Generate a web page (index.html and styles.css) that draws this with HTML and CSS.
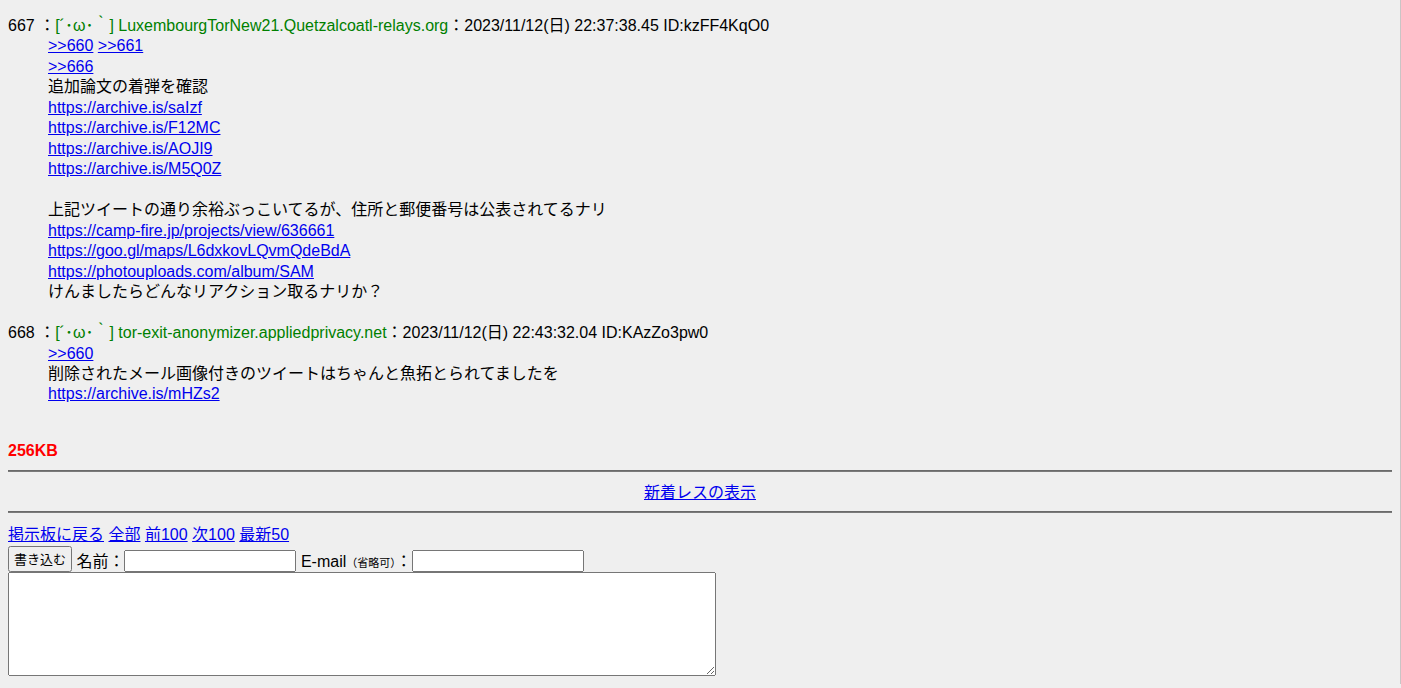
FILE: index.html
```html
<!DOCTYPE html>
<html lang="ja">
<head>
  <meta charset="UTF-8">
  <title>スレッド</title>
  <link rel="stylesheet" href="styles.css">
</head>
<body>

  <dl class="thread">
    <dt>667 ：<span class="name">[´･ω･｀] LuxembourgTorNew21.Quetzalcoatl-relays.org</span>：2023/11/12(日) 22:37:38.45 ID:kzFF4KqO0</dt>
    <dd>
      <a href="#">&gt;&gt;660</a> <a href="#">&gt;&gt;661</a><br>
      <a href="#">&gt;&gt;666</a><br>
      追加論文の着弾を確認<br>
      <a href="#">https://archive.is/saIzf</a><br>
      <a href="#">https://archive.is/F12MC</a><br>
      <a href="#">https://archive.is/AOJI9</a><br>
      <a href="#">https://archive.is/M5Q0Z</a><br>
      <br>
      上記ツイートの通り余裕ぶっこいてるが、住所と郵便番号は公表されてるナリ<br>
      <a href="#">https://camp-fire.jp/projects/view/636661</a><br>
      <a href="#">https://goo.gl/maps/L6dxkovLQvmQdeBdA</a><br>
      <a href="#">https://photouploads.com/album/SAM</a><br>
      けんましたらどんなリアクション取るナリか？<br>
      <br>
    </dd>
    <dt>668 ：<span class="name">[´･ω･｀] tor-exit-anonymizer.appliedprivacy.net</span>：2023/11/12(日) 22:43:32.04 ID:KAzZo3pw0</dt>
    <dd>
      <a href="#">&gt;&gt;660</a><br>
      削除されたメール画像付きのツイートはちゃんと魚拓とられてましたを<br>
      <a href="#">https://archive.is/mHZs2</a><br>
      <br>
    </dd>
  </dl>

  <p class="size">256KB</p>
  <hr>
  <div class="newres"><a href="#">新着レスの表示</a></div>
  <hr>

  <div class="nav">
    <a href="#">掲示板に戻る</a> <a href="#">全部</a> <a href="#">前100</a> <a href="#">次100</a> <a href="#">最新50</a>
  </div>

  <form class="post">
    <div class="row"><button type="button">書き込む</button> 名前：<input type="text" class="field"> E-mail<small>（省略可）</small>：<input type="text" class="field"></div>
    <textarea rows="5" cols="70"></textarea>
  </form>

</body>
</html>
```

FILE: styles.css
```css
html {
  background: #efefef;
  border-right: 1px solid #c9c5c5;
}

body {
  margin: 8px;
  font-family: "Liberation Sans", "Noto Sans CJK JP", sans-serif;
  font-size: 16px;
  line-height: 1.28;
  color: #000;
}

a { color: #0000ee; }

.thread {
  margin: 8px 0 0;
}

.thread dt { margin: 0; }

.thread dd {
  margin: 0 0 0 40px;
}

.name { color: green; }

.size {
  color: red;
  font-weight: bold;
  margin: 16px 0 0;
}

hr {
  margin: 8px 0;
  border: 0;
  border-top: 1px solid #6a6a6a;
  border-bottom: 1px solid #7a7a7a;
}

.newres {
  text-align: center;
  margin: 11px 0 7px;
}

.nav { margin-top: 12px; }

.post { margin: 0; }

.row { line-height: normal; }

button {
  font-family: inherit;
  font-size: 13px;
  height: 26px;
  padding: 1px 4px;
  vertical-align: bottom;
}

small { font-size: 11px; }

.field {
  width: 172px;
  height: 22px;
  box-sizing: border-box;
  vertical-align: bottom;
}

textarea {
  display: block;
  width: 708px;
  height: 104px;
  box-sizing: border-box;
  margin: 0;
}
```
